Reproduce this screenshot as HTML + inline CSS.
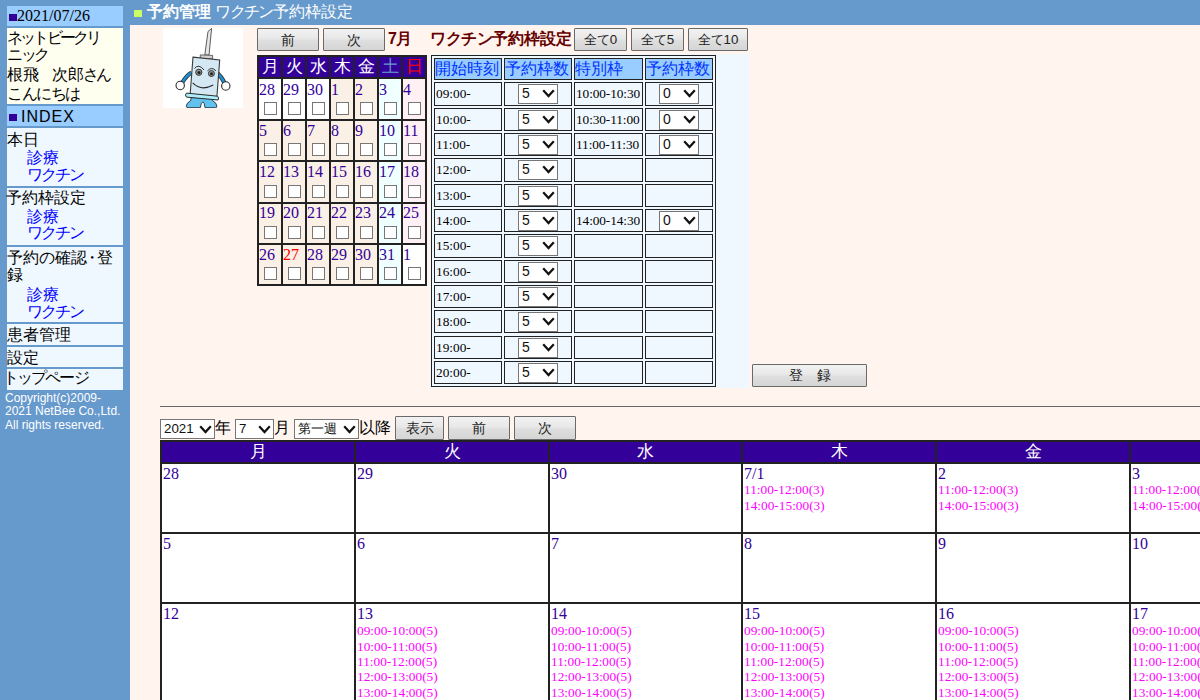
<!DOCTYPE html>
<html><head><meta charset="utf-8"><style>
html,body{margin:0;padding:0;}
body{width:1200px;height:700px;overflow:hidden;position:relative;background:#6699cc;font-family:"Liberation Sans",sans-serif;font-size:16px;color:#000;}
div{position:absolute;box-sizing:content-box;}
.j{font-size:16px;line-height:20px;white-space:nowrap;}
.s{font-family:"Liberation Serif",serif;white-space:nowrap;}
.btn{border:1px solid #6a6a6a;border-radius:1px;background:linear-gradient(#f2f2f2,#e8e8e8 45%,#dedede 55%,#d5d5d5);font-size:13.5px;color:#222;text-align:center;white-space:nowrap;}
.sel{border:1px solid #767676;background:#fff;font-size:14px;color:#111;white-space:nowrap;}
.cb{width:11px;height:11px;border:1px solid #777;background:#fff;}
.ev{font-family:"Liberation Serif",serif;font-size:13.33px;line-height:15.33px;color:#ff00ff;white-space:nowrap;}
.dn{font-family:"Liberation Serif",serif;font-size:16px;line-height:18.4px;color:#330099;white-space:nowrap;}
</style></head><body>

<div style="left:130px;top:25px;width:1070px;height:675px;background:#fff5ee;"></div>
<div style="left:134px;top:10px;width:8px;height:7px;background:#ccff66;"></div>
<div class="j" style="left:147px;top:1.5px;color:#fff;"><b>予約管理</b> <span style="letter-spacing:-1.7px">ワクチン</span>予約枠設定</div>
<div style="left:7px;top:6px;width:116px;height:20px;background:#99ccff;"></div>
<div style="left:9px;top:14px;width:8px;height:7px;background:#330099;"></div>
<div class="s" style="left:17px;top:7px;font-size:16px;line-height:18px;">2021/07/26</div>
<div style="left:7px;top:28px;width:116px;height:76px;background:#fffff0;"></div>
<div class="j" style="left:7px;top:28px;"><span style="letter-spacing:-2.8px">ネットビークリ</span></div>
<div class="j" style="left:7px;top:45.2px;"><span style="letter-spacing:-2.5px">ニック</span></div>
<div class="j" style="left:7px;top:65.4px;">根飛<span style="letter-spacing:-3px">　</span><span style="letter-spacing:-0.5px">次郎</span><span style="letter-spacing:-3px">さん</span></div>
<div class="j" style="left:7px;top:84px;"><span style="letter-spacing:-1.5px">こんにちは</span></div>
<div style="left:7px;top:106px;width:116px;height:20px;background:#99ccff;"></div>
<div style="left:9px;top:114px;width:8px;height:7px;background:#330099;"></div>
<div class="" style="left:21px;top:107px;font-size:16px;line-height:20px;letter-spacing:1px">INDEX</div>
<div style="left:7px;top:128px;width:116px;height:58px;background:#f0f8ff;"></div>
<div class="j" style="left:7px;top:130px;">本日</div>
<div class="j" style="left:27px;top:148px;color:#0000ff">診療</div>
<div class="j" style="left:27px;top:164.5px;color:#0000ff"><span style="letter-spacing:-2px">ワクチン</span></div>
<div style="left:7px;top:188px;width:116px;height:57px;background:#f0f8ff;"></div>
<div class="j" style="left:6px;top:187.5px;">予約枠設定</div>
<div class="j" style="left:27px;top:207px;color:#0000ff">診療</div>
<div class="j" style="left:27px;top:223px;color:#0000ff"><span style="letter-spacing:-2px">ワクチン</span></div>
<div style="left:7px;top:247px;width:116px;height:75px;background:#f0f8ff;"></div>
<div class="j" style="left:7px;top:248px;">予約の確<span style="letter-spacing:-3px">認・</span>登</div>
<div class="j" style="left:7px;top:265px;">録</div>
<div class="j" style="left:27px;top:285px;color:#0000ff">診療</div>
<div class="j" style="left:27px;top:302px;color:#0000ff"><span style="letter-spacing:-2px">ワクチン</span></div>
<div style="left:7px;top:324px;width:116px;height:21px;background:#f0f8ff;"></div>
<div class="j" style="left:7px;top:324.5px;">患者管理</div>
<div style="left:7px;top:347px;width:116px;height:20px;background:#f0f8ff;"></div>
<div class="j" style="left:7px;top:347.5px;">設定</div>
<div style="left:7px;top:369px;width:116px;height:21px;background:#f0f8ff;"></div>
<div class="j" style="left:3px;top:368px;"><span style="letter-spacing:-1.9px">トップページ</span></div>
<div class="" style="left:5px;top:391.5px;font-size:12px;line-height:13.8px;color:#fff;">Copyright(c)2009-<br>2021 NetBee Co.,Ltd.<br>All rights reserved.</div>
<div style="left:163px;top:28px;width:80px;height:80px;background:#fff;overflow:hidden">
<svg width="80" height="80" viewBox="163 28 80 80" style="position:absolute;left:0;top:0">
<path d="M204.8 55 L208 31.5 L211.6 28.4 L209 55 Z" fill="#e8e8e8" stroke="#4a4a4a" stroke-width="0.9"/>
<path d="M200.3 54.9 L212.6 55.4 L212.6 58.8 L200.2 58.4 Z" fill="#d0d0d0" stroke="#555" stroke-width="0.9"/>
<path d="M191.5 72.5 Q186 76 182 83" fill="none" stroke="#333" stroke-width="4.2"/>
<path d="M191.5 72.5 Q186 76 182 83" fill="none" stroke="#1a8fd6" stroke-width="2.6"/>
<path d="M217 73 Q221.5 76.5 224.5 83" fill="none" stroke="#333" stroke-width="4.2"/>
<path d="M217 73 Q221.5 76.5 224.5 83" fill="none" stroke="#1a8fd6" stroke-width="2.6"/>
<path d="M193 57.1 L219.7 60 L216.8 98 L190.1 95 Z" fill="#d4e8f4" stroke="#3a3a3a" stroke-width="1.1"/>
<circle cx="180.2" cy="85.5" r="4.2" fill="#fff" stroke="#2a2a2a" stroke-width="1.1"/>
<circle cx="225.8" cy="86" r="4.2" fill="#fff" stroke="#2a2a2a" stroke-width="1.1"/>
<circle cx="198.8" cy="72.3" r="3.1" fill="#9a9a9a" stroke="#333" stroke-width="1"/>
<circle cx="199" cy="72.6" r="1.6" fill="#222"/>
<circle cx="211.4" cy="73.5" r="3" fill="#9a9a9a" stroke="#333" stroke-width="1"/>
<circle cx="211.5" cy="73.8" r="1.5" fill="#222"/>
<path d="M194.5 68.5 Q198.5 63.2 204 70" fill="none" stroke="#333" stroke-width="1"/>
<path d="M207.5 70.8 Q211.8 66.2 215.9 70.8" fill="none" stroke="#333" stroke-width="1"/>
<path d="M192.7 82.9 Q201 91.5 213.3 85.1" fill="none" stroke="#2a2a2a" stroke-width="1.1"/>
<path d="M191.3 97.5 L190.5 100.8 Q186.3 103 186.3 106.3 Q186.5 107.7 188 107.7 L200.3 107.7 Q201 102.5 202.9 101.8 Q204.6 102.5 205 107.7 L215.5 107.7 Q217 107.6 216.9 106 Q216.5 102.8 212.8 100.8 L211.3 97.8 Z" fill="#62c2ee" stroke="#1f2f3a" stroke-width="0.9"/>
<path d="M186.5 93.1 L217.5 96.2 Q219.6 98 218 100 L186.5 97.1 Q184.4 95 186.5 93.1 Z" fill="#aeeefc" stroke="#2a2a2a" stroke-width="1"/>
</svg></div>
<div class="btn" style="left:257px;top:28px;width:60px;height:21px;line-height:21px;line-height:23.5px;">前</div>
<div class="btn" style="left:323px;top:28px;width:60px;height:21px;line-height:21px;line-height:23.5px;">次</div>
<div class="j" style="left:388px;top:28.5px;color:#660000;font-weight:bold;letter-spacing:-1px">7月</div>
<div class="j" style="left:430px;top:28.5px;color:#660000;font-weight:bold;"><span style="letter-spacing:-0.5px">ワクチン</span>予約枠設定</div>
<div class="btn" style="left:574px;top:28px;width:51px;height:21px;line-height:21px;font-size:13.33px;line-height:22.5px;">全て0</div>
<div class="btn" style="left:631px;top:28px;width:51px;height:21px;line-height:21px;font-size:13.33px;line-height:22.5px;">全て5</div>
<div class="btn" style="left:688px;top:28px;width:58px;height:21px;line-height:21px;font-size:13.33px;line-height:22.5px;">全て10</div>
<div style="left:257px;top:55px;width:170px;height:231px;background:#222;"></div>
<div style="left:259px;top:57px;width:22px;height:20px;background:#330099;"></div>
<div class="j" style="left:261.5px;top:56.5px;color:#fff;font-size:17px;">月</div>
<div style="left:283px;top:57px;width:22px;height:20px;background:#330099;"></div>
<div class="j" style="left:285.5px;top:56.5px;color:#fff;font-size:17px;">火</div>
<div style="left:307px;top:57px;width:22px;height:20px;background:#330099;"></div>
<div class="j" style="left:309.5px;top:56.5px;color:#fff;font-size:17px;">水</div>
<div style="left:331px;top:57px;width:22px;height:20px;background:#330099;"></div>
<div class="j" style="left:333.5px;top:56.5px;color:#fff;font-size:17px;">木</div>
<div style="left:355px;top:57px;width:22px;height:20px;background:#330099;"></div>
<div class="j" style="left:357.5px;top:56.5px;color:#fff;font-size:17px;">金</div>
<div style="left:379px;top:57px;width:22px;height:20px;background:#330099;"></div>
<div class="j" style="left:381.5px;top:56.5px;color:#6699cc;font-size:17px;">土</div>
<div style="left:403px;top:57px;width:22px;height:20px;background:#330099;"></div>
<div class="j" style="left:405.5px;top:56.5px;color:#ff0000;font-size:17px;">日</div>
<div style="left:259px;top:79px;width:22px;height:40px;background:#ffffff;"></div>
<div class="s" style="left:259px;top:81px;font-size:16px;line-height:18px;color:#330099">28</div>
<div class="cb" style="left:264px;top:102px"></div>
<div style="left:283px;top:79px;width:22px;height:40px;background:#ffffff;"></div>
<div class="s" style="left:283px;top:81px;font-size:16px;line-height:18px;color:#330099">29</div>
<div class="cb" style="left:288px;top:102px"></div>
<div style="left:307px;top:79px;width:22px;height:40px;background:#ffffff;"></div>
<div class="s" style="left:307px;top:81px;font-size:16px;line-height:18px;color:#330099">30</div>
<div class="cb" style="left:312px;top:102px"></div>
<div style="left:331px;top:79px;width:22px;height:40px;background:#faf0e6;"></div>
<div class="s" style="left:331px;top:81px;font-size:16px;line-height:18px;color:#330099">1</div>
<div class="cb" style="left:336px;top:102px"></div>
<div style="left:355px;top:79px;width:22px;height:40px;background:#faf0e6;"></div>
<div class="s" style="left:355px;top:81px;font-size:16px;line-height:18px;color:#330099">2</div>
<div class="cb" style="left:360px;top:102px"></div>
<div style="left:379px;top:79px;width:22px;height:40px;background:#f0ffff;"></div>
<div class="s" style="left:379px;top:81px;font-size:16px;line-height:18px;color:#330099">3</div>
<div class="cb" style="left:384px;top:102px"></div>
<div style="left:403px;top:79px;width:22px;height:40px;background:#fff0f5;"></div>
<div class="s" style="left:403px;top:81px;font-size:16px;line-height:18px;color:#330099">4</div>
<div class="cb" style="left:408px;top:102px"></div>
<div style="left:259px;top:121px;width:22px;height:39px;background:#faf0e6;"></div>
<div class="s" style="left:259px;top:122px;font-size:16px;line-height:18px;color:#330099">5</div>
<div class="cb" style="left:264px;top:143px"></div>
<div style="left:283px;top:121px;width:22px;height:39px;background:#faf0e6;"></div>
<div class="s" style="left:283px;top:122px;font-size:16px;line-height:18px;color:#330099">6</div>
<div class="cb" style="left:288px;top:143px"></div>
<div style="left:307px;top:121px;width:22px;height:39px;background:#faf0e6;"></div>
<div class="s" style="left:307px;top:122px;font-size:16px;line-height:18px;color:#330099">7</div>
<div class="cb" style="left:312px;top:143px"></div>
<div style="left:331px;top:121px;width:22px;height:39px;background:#faf0e6;"></div>
<div class="s" style="left:331px;top:122px;font-size:16px;line-height:18px;color:#330099">8</div>
<div class="cb" style="left:336px;top:143px"></div>
<div style="left:355px;top:121px;width:22px;height:39px;background:#faf0e6;"></div>
<div class="s" style="left:355px;top:122px;font-size:16px;line-height:18px;color:#330099">9</div>
<div class="cb" style="left:360px;top:143px"></div>
<div style="left:379px;top:121px;width:22px;height:39px;background:#f0ffff;"></div>
<div class="s" style="left:379px;top:122px;font-size:16px;line-height:18px;color:#330099">10</div>
<div class="cb" style="left:384px;top:143px"></div>
<div style="left:403px;top:121px;width:22px;height:39px;background:#fff0f5;"></div>
<div class="s" style="left:403px;top:122px;font-size:16px;line-height:18px;color:#330099">11</div>
<div class="cb" style="left:408px;top:143px"></div>
<div style="left:259px;top:162px;width:22px;height:40px;background:#faf0e6;"></div>
<div class="s" style="left:259px;top:163px;font-size:16px;line-height:18px;color:#330099">12</div>
<div class="cb" style="left:264px;top:185px"></div>
<div style="left:283px;top:162px;width:22px;height:40px;background:#faf0e6;"></div>
<div class="s" style="left:283px;top:163px;font-size:16px;line-height:18px;color:#330099">13</div>
<div class="cb" style="left:288px;top:185px"></div>
<div style="left:307px;top:162px;width:22px;height:40px;background:#faf0e6;"></div>
<div class="s" style="left:307px;top:163px;font-size:16px;line-height:18px;color:#330099">14</div>
<div class="cb" style="left:312px;top:185px"></div>
<div style="left:331px;top:162px;width:22px;height:40px;background:#faf0e6;"></div>
<div class="s" style="left:331px;top:163px;font-size:16px;line-height:18px;color:#330099">15</div>
<div class="cb" style="left:336px;top:185px"></div>
<div style="left:355px;top:162px;width:22px;height:40px;background:#faf0e6;"></div>
<div class="s" style="left:355px;top:163px;font-size:16px;line-height:18px;color:#330099">16</div>
<div class="cb" style="left:360px;top:185px"></div>
<div style="left:379px;top:162px;width:22px;height:40px;background:#f0ffff;"></div>
<div class="s" style="left:379px;top:163px;font-size:16px;line-height:18px;color:#330099">17</div>
<div class="cb" style="left:384px;top:185px"></div>
<div style="left:403px;top:162px;width:22px;height:40px;background:#fff0f5;"></div>
<div class="s" style="left:403px;top:163px;font-size:16px;line-height:18px;color:#330099">18</div>
<div class="cb" style="left:408px;top:185px"></div>
<div style="left:259px;top:204px;width:22px;height:39px;background:#faf0e6;"></div>
<div class="s" style="left:259px;top:204px;font-size:16px;line-height:18px;color:#330099">19</div>
<div class="cb" style="left:264px;top:226px"></div>
<div style="left:283px;top:204px;width:22px;height:39px;background:#faf0e6;"></div>
<div class="s" style="left:283px;top:204px;font-size:16px;line-height:18px;color:#330099">20</div>
<div class="cb" style="left:288px;top:226px"></div>
<div style="left:307px;top:204px;width:22px;height:39px;background:#faf0e6;"></div>
<div class="s" style="left:307px;top:204px;font-size:16px;line-height:18px;color:#330099">21</div>
<div class="cb" style="left:312px;top:226px"></div>
<div style="left:331px;top:204px;width:22px;height:39px;background:#faf0e6;"></div>
<div class="s" style="left:331px;top:204px;font-size:16px;line-height:18px;color:#330099">22</div>
<div class="cb" style="left:336px;top:226px"></div>
<div style="left:355px;top:204px;width:22px;height:39px;background:#faf0e6;"></div>
<div class="s" style="left:355px;top:204px;font-size:16px;line-height:18px;color:#330099">23</div>
<div class="cb" style="left:360px;top:226px"></div>
<div style="left:379px;top:204px;width:22px;height:39px;background:#f0ffff;"></div>
<div class="s" style="left:379px;top:204px;font-size:16px;line-height:18px;color:#330099">24</div>
<div class="cb" style="left:384px;top:226px"></div>
<div style="left:403px;top:204px;width:22px;height:39px;background:#fff0f5;"></div>
<div class="s" style="left:403px;top:204px;font-size:16px;line-height:18px;color:#330099">25</div>
<div class="cb" style="left:408px;top:226px"></div>
<div style="left:259px;top:245px;width:22px;height:39px;background:#faf0e6;"></div>
<div class="s" style="left:259px;top:246px;font-size:16px;line-height:18px;color:#330099">26</div>
<div class="cb" style="left:264px;top:267px"></div>
<div style="left:283px;top:245px;width:22px;height:39px;background:#faf0e6;"></div>
<div class="s" style="left:283px;top:246px;font-size:16px;line-height:18px;color:#ff0000">27</div>
<div class="cb" style="left:288px;top:267px"></div>
<div style="left:307px;top:245px;width:22px;height:39px;background:#faf0e6;"></div>
<div class="s" style="left:307px;top:246px;font-size:16px;line-height:18px;color:#330099">28</div>
<div class="cb" style="left:312px;top:267px"></div>
<div style="left:331px;top:245px;width:22px;height:39px;background:#faf0e6;"></div>
<div class="s" style="left:331px;top:246px;font-size:16px;line-height:18px;color:#330099">29</div>
<div class="cb" style="left:336px;top:267px"></div>
<div style="left:355px;top:245px;width:22px;height:39px;background:#faf0e6;"></div>
<div class="s" style="left:355px;top:246px;font-size:16px;line-height:18px;color:#330099">30</div>
<div class="cb" style="left:360px;top:267px"></div>
<div style="left:379px;top:245px;width:22px;height:39px;background:#f0ffff;"></div>
<div class="s" style="left:379px;top:246px;font-size:16px;line-height:18px;color:#330099">31</div>
<div class="cb" style="left:384px;top:267px"></div>
<div style="left:403px;top:245px;width:22px;height:39px;background:#ffffff;"></div>
<div class="s" style="left:403px;top:246px;font-size:16px;line-height:18px;color:#330099">1</div>
<div class="cb" style="left:408px;top:267px"></div>
<div style="left:430px;top:54px;width:319px;height:334px;background:#f0f8ff;"></div>
<div style="left:431px;top:55px;width:283px;height:330px;background:#f0f8ff;border:1px solid #222;"></div>
<div style="left:434px;top:58px;width:66px;height:20px;background:#99ccff;border:1px solid #222;"></div>
<div class="j" style="left:435px;top:58.5px;color:#0033ff;">開始時刻</div>
<div style="left:504px;top:58px;width:66px;height:20px;background:#99ccff;border:1px solid #222;"></div>
<div class="j" style="left:505px;top:58.5px;color:#0033ff;">予約枠数</div>
<div style="left:574px;top:58px;width:67px;height:20px;background:#99ccff;border:1px solid #222;"></div>
<div class="j" style="left:575px;top:58.5px;color:#0033ff;">特別枠</div>
<div style="left:645px;top:58px;width:66px;height:20px;background:#99ccff;border:1px solid #222;"></div>
<div class="j" style="left:646px;top:58.5px;color:#0033ff;">予約枠数</div>
<div style="left:434px;top:82px;width:66px;height:22px;background:#f0f8ff;border:1px solid #222;"></div>
<div style="left:504px;top:82px;width:66px;height:22px;background:#f0f8ff;border:1px solid #222;"></div>
<div style="left:574px;top:82px;width:67px;height:22px;background:#f0f8ff;border:1px solid #222;"></div>
<div style="left:645px;top:82px;width:66px;height:22px;background:#f0f8ff;border:1px solid #222;"></div>
<div class="s" style="left:436px;top:82px;font-size:13.33px;line-height:24px">09:00-</div>
<div class="sel" style="left:518px;top:84px;width:38px;height:18px;"><span style="position:absolute;left:3px;top:-1px;line-height:18px">5</span><svg width="13" height="9" viewBox="0 0 13 9" style="position:absolute;right:2px;top:4px"><path d="M1.2 1.2 L6.5 7 L11.8 1.2" fill="none" stroke="#111" stroke-width="2.2"/></svg></div>
<div class="s" style="left:576px;top:82px;font-size:13.33px;line-height:24px;letter-spacing:-0.1px">10:00-10:30</div>
<div class="sel" style="left:659px;top:84px;width:38px;height:18px;"><span style="position:absolute;left:3px;top:-1px;line-height:18px">0</span><svg width="13" height="9" viewBox="0 0 13 9" style="position:absolute;right:2px;top:4px"><path d="M1.2 1.2 L6.5 7 L11.8 1.2" fill="none" stroke="#111" stroke-width="2.2"/></svg></div>
<div style="left:434px;top:108px;width:66px;height:21px;background:#f0f8ff;border:1px solid #222;"></div>
<div style="left:504px;top:108px;width:66px;height:21px;background:#f0f8ff;border:1px solid #222;"></div>
<div style="left:574px;top:108px;width:67px;height:21px;background:#f0f8ff;border:1px solid #222;"></div>
<div style="left:645px;top:108px;width:66px;height:21px;background:#f0f8ff;border:1px solid #222;"></div>
<div class="s" style="left:436px;top:108px;font-size:13.33px;line-height:23px">10:00-</div>
<div class="sel" style="left:518px;top:110px;width:38px;height:18px;"><span style="position:absolute;left:3px;top:-1px;line-height:18px">5</span><svg width="13" height="9" viewBox="0 0 13 9" style="position:absolute;right:2px;top:4px"><path d="M1.2 1.2 L6.5 7 L11.8 1.2" fill="none" stroke="#111" stroke-width="2.2"/></svg></div>
<div class="s" style="left:576px;top:108px;font-size:13.33px;line-height:23px;letter-spacing:-0.1px">10:30-11:00</div>
<div class="sel" style="left:659px;top:110px;width:38px;height:18px;"><span style="position:absolute;left:3px;top:-1px;line-height:18px">0</span><svg width="13" height="9" viewBox="0 0 13 9" style="position:absolute;right:2px;top:4px"><path d="M1.2 1.2 L6.5 7 L11.8 1.2" fill="none" stroke="#111" stroke-width="2.2"/></svg></div>
<div style="left:434px;top:133px;width:66px;height:21px;background:#f0f8ff;border:1px solid #222;"></div>
<div style="left:504px;top:133px;width:66px;height:21px;background:#f0f8ff;border:1px solid #222;"></div>
<div style="left:574px;top:133px;width:67px;height:21px;background:#f0f8ff;border:1px solid #222;"></div>
<div style="left:645px;top:133px;width:66px;height:21px;background:#f0f8ff;border:1px solid #222;"></div>
<div class="s" style="left:436px;top:133px;font-size:13.33px;line-height:23px">11:00-</div>
<div class="sel" style="left:518px;top:135px;width:38px;height:18px;"><span style="position:absolute;left:3px;top:-1px;line-height:18px">5</span><svg width="13" height="9" viewBox="0 0 13 9" style="position:absolute;right:2px;top:4px"><path d="M1.2 1.2 L6.5 7 L11.8 1.2" fill="none" stroke="#111" stroke-width="2.2"/></svg></div>
<div class="s" style="left:576px;top:133px;font-size:13.33px;line-height:23px;letter-spacing:-0.1px">11:00-11:30</div>
<div class="sel" style="left:659px;top:135px;width:38px;height:18px;"><span style="position:absolute;left:3px;top:-1px;line-height:18px">0</span><svg width="13" height="9" viewBox="0 0 13 9" style="position:absolute;right:2px;top:4px"><path d="M1.2 1.2 L6.5 7 L11.8 1.2" fill="none" stroke="#111" stroke-width="2.2"/></svg></div>
<div style="left:434px;top:158px;width:66px;height:22px;background:#f0f8ff;border:1px solid #222;"></div>
<div style="left:504px;top:158px;width:66px;height:22px;background:#f0f8ff;border:1px solid #222;"></div>
<div style="left:574px;top:158px;width:67px;height:22px;background:#f0f8ff;border:1px solid #222;"></div>
<div style="left:645px;top:158px;width:66px;height:22px;background:#f0f8ff;border:1px solid #222;"></div>
<div class="s" style="left:436px;top:158px;font-size:13.33px;line-height:24px">12:00-</div>
<div class="sel" style="left:518px;top:160px;width:38px;height:18px;"><span style="position:absolute;left:3px;top:-1px;line-height:18px">5</span><svg width="13" height="9" viewBox="0 0 13 9" style="position:absolute;right:2px;top:4px"><path d="M1.2 1.2 L6.5 7 L11.8 1.2" fill="none" stroke="#111" stroke-width="2.2"/></svg></div>
<div style="left:434px;top:184px;width:66px;height:21px;background:#f0f8ff;border:1px solid #222;"></div>
<div style="left:504px;top:184px;width:66px;height:21px;background:#f0f8ff;border:1px solid #222;"></div>
<div style="left:574px;top:184px;width:67px;height:21px;background:#f0f8ff;border:1px solid #222;"></div>
<div style="left:645px;top:184px;width:66px;height:21px;background:#f0f8ff;border:1px solid #222;"></div>
<div class="s" style="left:436px;top:184px;font-size:13.33px;line-height:23px">13:00-</div>
<div class="sel" style="left:518px;top:186px;width:38px;height:18px;"><span style="position:absolute;left:3px;top:-1px;line-height:18px">5</span><svg width="13" height="9" viewBox="0 0 13 9" style="position:absolute;right:2px;top:4px"><path d="M1.2 1.2 L6.5 7 L11.8 1.2" fill="none" stroke="#111" stroke-width="2.2"/></svg></div>
<div style="left:434px;top:209px;width:66px;height:21px;background:#f0f8ff;border:1px solid #222;"></div>
<div style="left:504px;top:209px;width:66px;height:21px;background:#f0f8ff;border:1px solid #222;"></div>
<div style="left:574px;top:209px;width:67px;height:21px;background:#f0f8ff;border:1px solid #222;"></div>
<div style="left:645px;top:209px;width:66px;height:21px;background:#f0f8ff;border:1px solid #222;"></div>
<div class="s" style="left:436px;top:209px;font-size:13.33px;line-height:23px">14:00-</div>
<div class="sel" style="left:518px;top:211px;width:38px;height:18px;"><span style="position:absolute;left:3px;top:-1px;line-height:18px">5</span><svg width="13" height="9" viewBox="0 0 13 9" style="position:absolute;right:2px;top:4px"><path d="M1.2 1.2 L6.5 7 L11.8 1.2" fill="none" stroke="#111" stroke-width="2.2"/></svg></div>
<div class="s" style="left:576px;top:209px;font-size:13.33px;line-height:23px;letter-spacing:-0.1px">14:00-14:30</div>
<div class="sel" style="left:659px;top:211px;width:38px;height:18px;"><span style="position:absolute;left:3px;top:-1px;line-height:18px">0</span><svg width="13" height="9" viewBox="0 0 13 9" style="position:absolute;right:2px;top:4px"><path d="M1.2 1.2 L6.5 7 L11.8 1.2" fill="none" stroke="#111" stroke-width="2.2"/></svg></div>
<div style="left:434px;top:234px;width:66px;height:22px;background:#f0f8ff;border:1px solid #222;"></div>
<div style="left:504px;top:234px;width:66px;height:22px;background:#f0f8ff;border:1px solid #222;"></div>
<div style="left:574px;top:234px;width:67px;height:22px;background:#f0f8ff;border:1px solid #222;"></div>
<div style="left:645px;top:234px;width:66px;height:22px;background:#f0f8ff;border:1px solid #222;"></div>
<div class="s" style="left:436px;top:234px;font-size:13.33px;line-height:24px">15:00-</div>
<div class="sel" style="left:518px;top:236px;width:38px;height:18px;"><span style="position:absolute;left:3px;top:-1px;line-height:18px">5</span><svg width="13" height="9" viewBox="0 0 13 9" style="position:absolute;right:2px;top:4px"><path d="M1.2 1.2 L6.5 7 L11.8 1.2" fill="none" stroke="#111" stroke-width="2.2"/></svg></div>
<div style="left:434px;top:260px;width:66px;height:21px;background:#f0f8ff;border:1px solid #222;"></div>
<div style="left:504px;top:260px;width:66px;height:21px;background:#f0f8ff;border:1px solid #222;"></div>
<div style="left:574px;top:260px;width:67px;height:21px;background:#f0f8ff;border:1px solid #222;"></div>
<div style="left:645px;top:260px;width:66px;height:21px;background:#f0f8ff;border:1px solid #222;"></div>
<div class="s" style="left:436px;top:260px;font-size:13.33px;line-height:23px">16:00-</div>
<div class="sel" style="left:518px;top:262px;width:38px;height:18px;"><span style="position:absolute;left:3px;top:-1px;line-height:18px">5</span><svg width="13" height="9" viewBox="0 0 13 9" style="position:absolute;right:2px;top:4px"><path d="M1.2 1.2 L6.5 7 L11.8 1.2" fill="none" stroke="#111" stroke-width="2.2"/></svg></div>
<div style="left:434px;top:285px;width:66px;height:21px;background:#f0f8ff;border:1px solid #222;"></div>
<div style="left:504px;top:285px;width:66px;height:21px;background:#f0f8ff;border:1px solid #222;"></div>
<div style="left:574px;top:285px;width:67px;height:21px;background:#f0f8ff;border:1px solid #222;"></div>
<div style="left:645px;top:285px;width:66px;height:21px;background:#f0f8ff;border:1px solid #222;"></div>
<div class="s" style="left:436px;top:285px;font-size:13.33px;line-height:23px">17:00-</div>
<div class="sel" style="left:518px;top:287px;width:38px;height:18px;"><span style="position:absolute;left:3px;top:-1px;line-height:18px">5</span><svg width="13" height="9" viewBox="0 0 13 9" style="position:absolute;right:2px;top:4px"><path d="M1.2 1.2 L6.5 7 L11.8 1.2" fill="none" stroke="#111" stroke-width="2.2"/></svg></div>
<div style="left:434px;top:310px;width:66px;height:21px;background:#f0f8ff;border:1px solid #222;"></div>
<div style="left:504px;top:310px;width:66px;height:21px;background:#f0f8ff;border:1px solid #222;"></div>
<div style="left:574px;top:310px;width:67px;height:21px;background:#f0f8ff;border:1px solid #222;"></div>
<div style="left:645px;top:310px;width:66px;height:21px;background:#f0f8ff;border:1px solid #222;"></div>
<div class="s" style="left:436px;top:310px;font-size:13.33px;line-height:23px">18:00-</div>
<div class="sel" style="left:518px;top:312px;width:38px;height:18px;"><span style="position:absolute;left:3px;top:-1px;line-height:18px">5</span><svg width="13" height="9" viewBox="0 0 13 9" style="position:absolute;right:2px;top:4px"><path d="M1.2 1.2 L6.5 7 L11.8 1.2" fill="none" stroke="#111" stroke-width="2.2"/></svg></div>
<div style="left:434px;top:336px;width:66px;height:21px;background:#f0f8ff;border:1px solid #222;"></div>
<div style="left:504px;top:336px;width:66px;height:21px;background:#f0f8ff;border:1px solid #222;"></div>
<div style="left:574px;top:336px;width:67px;height:21px;background:#f0f8ff;border:1px solid #222;"></div>
<div style="left:645px;top:336px;width:66px;height:21px;background:#f0f8ff;border:1px solid #222;"></div>
<div class="s" style="left:436px;top:336px;font-size:13.33px;line-height:23px">19:00-</div>
<div class="sel" style="left:518px;top:338px;width:38px;height:18px;"><span style="position:absolute;left:3px;top:-1px;line-height:18px">5</span><svg width="13" height="9" viewBox="0 0 13 9" style="position:absolute;right:2px;top:4px"><path d="M1.2 1.2 L6.5 7 L11.8 1.2" fill="none" stroke="#111" stroke-width="2.2"/></svg></div>
<div style="left:434px;top:361px;width:66px;height:21px;background:#f0f8ff;border:1px solid #222;"></div>
<div style="left:504px;top:361px;width:66px;height:21px;background:#f0f8ff;border:1px solid #222;"></div>
<div style="left:574px;top:361px;width:67px;height:21px;background:#f0f8ff;border:1px solid #222;"></div>
<div style="left:645px;top:361px;width:66px;height:21px;background:#f0f8ff;border:1px solid #222;"></div>
<div class="s" style="left:436px;top:361px;font-size:13.33px;line-height:23px">20:00-</div>
<div class="sel" style="left:518px;top:363px;width:38px;height:18px;"><span style="position:absolute;left:3px;top:-1px;line-height:18px">5</span><svg width="13" height="9" viewBox="0 0 13 9" style="position:absolute;right:2px;top:4px"><path d="M1.2 1.2 L6.5 7 L11.8 1.2" fill="none" stroke="#111" stroke-width="2.2"/></svg></div>
<div class="btn" style="left:752px;top:364px;width:113px;height:21px;line-height:21px;line-height:22px;">登　録</div>
<div style="left:160px;top:406px;width:1040px;height:1px;background:#666;"></div>
<div class="sel" style="left:160px;top:419px;width:53px;height:18px;font-size:13.33px;"><span style="position:absolute;left:3px;top:0px;line-height:18px">2021</span><svg width="13" height="9" viewBox="0 0 13 9" style="position:absolute;right:2px;top:5px"><path d="M1.2 1.2 L6.5 7 L11.8 1.2" fill="none" stroke="#111" stroke-width="2.2"/></svg></div>
<div class="j" style="left:215px;top:417.5px;">年</div>
<div class="sel" style="left:235px;top:419px;width:37px;height:18px;font-size:13.33px;"><span style="position:absolute;left:3px;top:0px;line-height:18px">7</span><svg width="13" height="9" viewBox="0 0 13 9" style="position:absolute;right:2px;top:5px"><path d="M1.2 1.2 L6.5 7 L11.8 1.2" fill="none" stroke="#111" stroke-width="2.2"/></svg></div>
<div class="j" style="left:274px;top:417.5px;">月</div>
<div class="sel" style="left:294px;top:419px;width:63px;height:18px;font-size:13.33px;"><span style="position:absolute;left:3px;top:0px;line-height:18px">第一週</span><svg width="13" height="9" viewBox="0 0 13 9" style="position:absolute;right:2px;top:5px"><path d="M1.2 1.2 L6.5 7 L11.8 1.2" fill="none" stroke="#111" stroke-width="2.2"/></svg></div>
<div class="j" style="left:359px;top:417.5px;">以降</div>
<div class="btn" style="left:395px;top:416px;width:47px;height:22px;line-height:22px;line-height:24px;">表示</div>
<div class="btn" style="left:448px;top:416px;width:60px;height:22px;line-height:22px;line-height:24px;">前</div>
<div class="btn" style="left:514px;top:416px;width:60px;height:22px;line-height:22px;line-height:24px;">次</div>
<div style="left:160px;top:440px;width:1040px;height:260px;background:#222;"></div>
<div style="left:162px;top:442px;width:192px;height:20px;background:#330099;"></div>
<div class="j" style="left:162px;top:442px;width:192px;text-align:center;color:#fff;line-height:20px;font-size:17px">月</div>
<div style="left:356px;top:442px;width:192px;height:20px;background:#330099;"></div>
<div class="j" style="left:356px;top:442px;width:192px;text-align:center;color:#fff;line-height:20px;font-size:17px">火</div>
<div style="left:550px;top:442px;width:191px;height:20px;background:#330099;"></div>
<div class="j" style="left:550px;top:442px;width:191px;text-align:center;color:#fff;line-height:20px;font-size:17px">水</div>
<div style="left:743px;top:442px;width:192px;height:20px;background:#330099;"></div>
<div class="j" style="left:743px;top:442px;width:192px;text-align:center;color:#fff;line-height:20px;font-size:17px">木</div>
<div style="left:937px;top:442px;width:192px;height:20px;background:#330099;"></div>
<div class="j" style="left:937px;top:442px;width:192px;text-align:center;color:#fff;line-height:20px;font-size:17px">金</div>
<div style="left:1131px;top:442px;width:192px;height:20px;background:#330099;"></div>
<div class="j" style="left:1131px;top:442px;width:192px;text-align:center;color:#fff;line-height:20px;font-size:17px">土</div>
<div style="left:162px;top:464px;width:192px;height:68px;background:#fff;"></div>
<div class="dn" style="left:163px;top:465px">28</div>
<div style="left:356px;top:464px;width:192px;height:68px;background:#fff;"></div>
<div class="dn" style="left:357px;top:465px">29</div>
<div style="left:550px;top:464px;width:191px;height:68px;background:#fff;"></div>
<div class="dn" style="left:551px;top:465px">30</div>
<div style="left:743px;top:464px;width:192px;height:68px;background:#fff;"></div>
<div class="dn" style="left:744px;top:465px">7/1</div>
<div class="ev" style="left:744px;top:482.4px">11:00-12:00(3)<br>14:00-15:00(3)</div>
<div style="left:937px;top:464px;width:192px;height:68px;background:#fff;"></div>
<div class="dn" style="left:938px;top:465px">2</div>
<div class="ev" style="left:938px;top:482.4px">11:00-12:00(3)<br>14:00-15:00(3)</div>
<div style="left:1131px;top:464px;width:192px;height:68px;background:#fff;"></div>
<div class="dn" style="left:1132px;top:465px">3</div>
<div class="ev" style="left:1132px;top:482.4px">11:00-12:00(3)<br>14:00-15:00(3)</div>
<div style="left:162px;top:534px;width:192px;height:68px;background:#fff;"></div>
<div class="dn" style="left:163px;top:535px">5</div>
<div style="left:356px;top:534px;width:192px;height:68px;background:#fff;"></div>
<div class="dn" style="left:357px;top:535px">6</div>
<div style="left:550px;top:534px;width:191px;height:68px;background:#fff;"></div>
<div class="dn" style="left:551px;top:535px">7</div>
<div style="left:743px;top:534px;width:192px;height:68px;background:#fff;"></div>
<div class="dn" style="left:744px;top:535px">8</div>
<div style="left:937px;top:534px;width:192px;height:68px;background:#fff;"></div>
<div class="dn" style="left:938px;top:535px">9</div>
<div style="left:1131px;top:534px;width:192px;height:68px;background:#fff;"></div>
<div class="dn" style="left:1132px;top:535px">10</div>
<div style="left:162px;top:604px;width:192px;height:200px;background:#fff;"></div>
<div class="dn" style="left:163px;top:605px">12</div>
<div style="left:356px;top:604px;width:192px;height:200px;background:#fff;"></div>
<div class="dn" style="left:357px;top:605px">13</div>
<div class="ev" style="left:357px;top:623.4px">09:00-10:00(5)<br>10:00-11:00(5)<br>11:00-12:00(5)<br>12:00-13:00(5)<br>13:00-14:00(5)<br>14:00-15:00(5)</div>
<div style="left:550px;top:604px;width:191px;height:200px;background:#fff;"></div>
<div class="dn" style="left:551px;top:605px">14</div>
<div class="ev" style="left:551px;top:623.4px">09:00-10:00(5)<br>10:00-11:00(5)<br>11:00-12:00(5)<br>12:00-13:00(5)<br>13:00-14:00(5)<br>14:00-15:00(5)</div>
<div style="left:743px;top:604px;width:192px;height:200px;background:#fff;"></div>
<div class="dn" style="left:744px;top:605px">15</div>
<div class="ev" style="left:744px;top:623.4px">09:00-10:00(5)<br>10:00-11:00(5)<br>11:00-12:00(5)<br>12:00-13:00(5)<br>13:00-14:00(5)<br>14:00-15:00(5)</div>
<div style="left:937px;top:604px;width:192px;height:200px;background:#fff;"></div>
<div class="dn" style="left:938px;top:605px">16</div>
<div class="ev" style="left:938px;top:623.4px">09:00-10:00(5)<br>10:00-11:00(5)<br>11:00-12:00(5)<br>12:00-13:00(5)<br>13:00-14:00(5)<br>14:00-15:00(5)</div>
<div style="left:1131px;top:604px;width:192px;height:200px;background:#fff;"></div>
<div class="dn" style="left:1132px;top:605px">17</div>
<div class="ev" style="left:1132px;top:623.4px">09:00-10:00(5)<br>10:00-11:00(5)<br>11:00-12:00(5)<br>12:00-13:00(5)<br>13:00-14:00(5)<br>14:00-15:00(5)</div>
</body></html>
